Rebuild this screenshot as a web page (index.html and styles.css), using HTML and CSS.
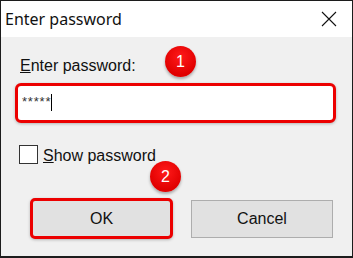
FILE: index.html
```html
<!DOCTYPE html>
<html lang="en">
<head>
    <meta charset="UTF-8">
    <title>Enter password</title>
    <link rel="stylesheet" href="styles.css">
</head>
<body>

<div class="window">
    <!-- barra de título -->
    <div class="titlebar">
        <span class="title">Enter password</span>
        <svg class="close" width="16" height="16" viewBox="0 0 16 16">
            <path d="M1 1 L15 15 M15 1 L1 15" stroke="#111" stroke-width="1.1" fill="none"/>
        </svg>
    </div>

    <div class="content">
        <label class="label"><u>E</u>nter password:</label>
        <div class="pwfield">
            <span class="typed">*****</span><span class="caret"></span>
        </div>

        <div class="check-row">
            <span class="checkbox"></span>
            <span class="check-label"><u>S</u>how password</span>
        </div>

        <div class="buttons">
            <button class="btn btn-ok">OK</button>
            <button class="btn">Cancel</button>
        </div>
    </div>

    <!-- marcas numeradas -->
    <div class="badge badge-1">1</div>
    <div class="badge badge-2">2</div>
</div>

</body>
</html>
```

FILE: styles.css
```css
body {
    margin: 0;
    background-color: #f0f0f0;
}

.window {
    position: relative;
    width: 353px;
    height: 258px;
    box-sizing: border-box;
    border: 1px solid #1c1c1c;
    border-bottom-width: 2px;
    display: flex;
    flex-direction: column;
    font-family: "Liberation Sans", Arial, sans-serif;
    font-size: 16px;
    color: #000;
    overflow: hidden;
}

.titlebar {
    height: 36px;
    background-color: #fff;
    display: flex;
    align-items: center;
    justify-content: space-between;
    padding: 0 15px 0 4px;
}

.title {
    font-family: "Noto Sans", "Open Sans", sans-serif;
    font-size: 16px;
    color: #111;
    margin-top: -1px;
}

.close {
    margin-top: -1px;
}

.content {
    flex: 1;
    background-color: #f0f0f0;
    padding: 20px 16px 0 14px;
    display: flex;
    flex-direction: column;
}

.label {
    display: block;
    line-height: 18px;
    margin-left: 5px;
    color: #111;
}

.pwfield {
    margin-top: 8px;
    width: 321px;
    height: 40px;
    box-sizing: border-box;
    border: 3px solid #ec0000;
    border-radius: 6px;
    background-color: #fff;
    box-shadow: 0 1px 3px rgba(0,0,0,0.25);
    display: flex;
    align-items: center;
    padding-left: 4px;
}

.typed {
    font-size: 13px;
    line-height: 16px;
    letter-spacing: 0.8px;
    color: #333;
    margin-top: -2px;
}

.caret {
    display: inline-block;
    width: 1px;
    height: 17px;
    background-color: #000;
    margin-left: 0;
    margin-top: -2px;
}

.check-row {
    display: flex;
    align-items: center;
    margin-top: 20px;
    margin-left: 4px;
}

.checkbox {
    width: 19px;
    height: 19px;
    box-sizing: border-box;
    border: 1px solid #333;
    background-color: #fff;
}

.check-label {
    margin-left: 5px;
    margin-top: 4px;
    line-height: 18px;
    color: #111;
}

.buttons {
    display: flex;
    align-items: center;
    gap: 18px;
    margin-top: 33px;
    margin-left: 15px;
}

.btn {
    width: 142px;
    height: 38px;
    box-sizing: border-box;
    border: 1px solid #adadad;
    background-color: #e1e1e1;
    font-family: "Liberation Sans", Arial, sans-serif;
    font-size: 16px;
    color: #111;
    padding: 0;
}

.btn-ok {
    width: 143px;
    height: 41px;
    border: 3px solid #ec0000;
    border-radius: 5px;
    box-shadow: 0 1px 3px rgba(0,0,0,0.25);
}

.badge {
    position: absolute;
    width: 31px;
    height: 31px;
    border-radius: 50%;
    background: radial-gradient(circle at 50% 35%, #ff1a1a, #e00000 70%);
    box-shadow: 0 2px 3px rgba(0,0,0,0.3);
    color: #fff;
    font-size: 16px;
    line-height: 31px;
    text-align: center;
}

.badge-1 {
    left: 164px;
    top: 45px;
}

.badge-2 {
    left: 149px;
    top: 160px;
}
```
